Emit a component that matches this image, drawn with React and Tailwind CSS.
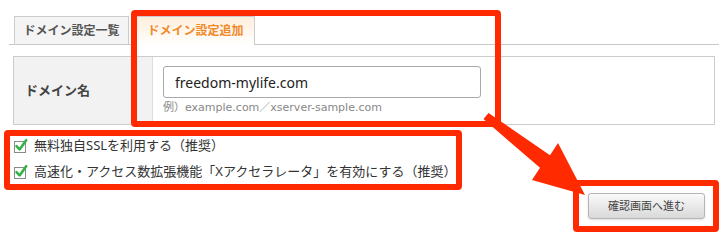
import React from 'react';

const font = { fontFamily: '"Noto Sans", "Noto Sans CJK JP", sans-serif' };
const hintFont = { fontFamily: '"DejaVu Sans", "Noto Sans CJK JP", sans-serif' };

const CheckIcon = () => (
    <svg width="16" height="16" viewBox="0 0 16 16" className="shrink-0">
        <rect x="1.5" y="3.5" width="11" height="11" fill="#fff" stroke="#8a8a8a" strokeWidth="1" />
        <path d="M3.5 8.2 L6.6 11.4 L13.2 2.2" fill="none" stroke="#35b247" strokeWidth="2.6" strokeLinecap="round" strokeLinejoin="round" />
    </svg>
);

const CheckRow = ({ label }) => (
    <div className="flex items-center h-[26px] pl-[13px] gap-[5px] text-[13px] text-[#333]">
        <CheckIcon />
        <span>{label}</span>
    </div>
);

const App = () => {
    return (
        <div className="relative w-[728px] h-[240px] bg-white overflow-hidden" style={font}>
            {/* tabs */}
            <div className="pt-[17px] px-[9px]">
                <div className="flex items-end h-[28px] pl-[5px] gap-[7px] border-b border-[#c8c8c8]">
                    <div className="w-[115px] h-[28px] flex items-center justify-center border border-b-0 border-[#cccccc] bg-[#f4f4f4] text-[12px] font-bold text-[#555]">
                        ドメイン設定一覧
                    </div>
                    <div className="w-[119px] h-[29px] -mb-px flex items-center justify-center border border-b-0 border-[#cccccc] bg-linear-to-b from-[#fdeedb] to-white text-[12px] font-bold text-[#f08a2a]">
                        ドメイン設定追加
                    </div>
                </div>
            </div>

            {/* form table */}
            <div className="mt-[11px] mx-[13px] h-[69px] flex border border-[#cccccc]">
                <div className="w-[139px] shrink-0 flex items-center pl-[11px] bg-[#f2f2f2] border-r border-[#dddddd] text-[13px] font-bold text-[#444]">
                    ドメイン名
                </div>
                <div className="pl-[10px] pt-[9px]">
                    <div className="w-[318px] h-[32px] flex items-center px-[11px] border border-[#a9a9a9] rounded-[3px] text-[14px] text-[#222]">
                        freedom-mylife.com
                    </div>
                    <div className="mt-[2px] text-[11px] text-[#888]" style={hintFont}>例）example.com／xserver-sample.com</div>
                </div>
            </div>

            {/* options */}
            <div className="mt-[8px]">
                <CheckRow label="無料独自SSLを利用する（推奨）" />
                <CheckRow label="高速化・アクセス数拡張機能「Xアクセラレータ」を有効にする（推奨）" />
            </div>

            <div className="mt-[8px] flex justify-end pr-[23px]">
                <button className="w-[117px] h-[26px] border border-[#b5b5b5] rounded-[3px] bg-linear-to-b from-[#fafafa] to-[#d9d9d9] shadow-sm text-[11px] text-[#444]">
                    確認画面へ進む
                </button>
            </div>

            {/* annotations */}
            <div className="absolute left-[131px] top-[10px] w-[370px] h-[117px] border-[6px] border-[#ff2a00] rounded-[4px] pointer-events-none" />
            <div className="absolute left-[4px] top-[130px] w-[458px] h-[60px] border-[6px] border-[#ff2a00] rounded-[4px] pointer-events-none" />
            <div className="absolute left-[573px] top-[180px] w-[146px] h-[52px] border-[6px] border-[#ff2a00] rounded-[4px] pointer-events-none" />
            <svg className="absolute left-0 top-0 pointer-events-none" width="728" height="240">
                <polygon
                    points="488.5,112.9 550,155.2 558,143 585,195 532,180 540,167.8 483.5,119.1"
                    fill="#ff2a00"
                />
            </svg>
        </div>
    );
};

export default App;
